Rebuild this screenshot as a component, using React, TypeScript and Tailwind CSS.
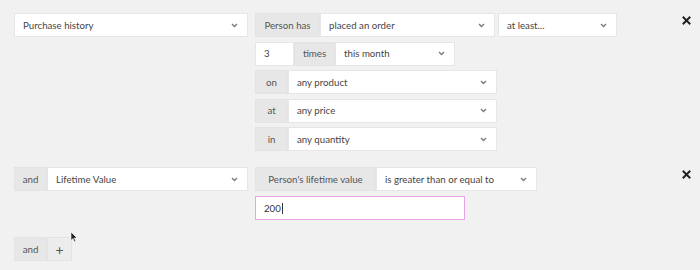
import React from "react";

function Chevron() {
  return (
    <svg width="7" height="5" viewBox="0 0 7 5" className="shrink-0">
      <path d="M1 1l2.5 2.5L6 1" fill="none" stroke="#777" strokeWidth="1.3" />
    </svg>
  );
}

function Close() {
  return (
    <svg width="9" height="9" viewBox="0 0 9 9">
      <path d="M1.5 1.5l6 6M7.5 1.5l-6 6" stroke="#222" strokeWidth="2" strokeLinecap="square" />
    </svg>
  );
}

function Select({ label, w }: { label: string; w: string }) {
  return (
    <div
      className={`${w} flex h-6 items-center justify-between border border-[#e6e6e6] bg-white pl-[8px] pr-[9px] text-[#454545]`}
    >
      <span>{label}</span>
      <Chevron />
    </div>
  );
}

function Label({ text, w }: { text: string; w: string }) {
  return (
    <div className={`${w} flex h-6 items-center justify-center border border-[#e3e3e3] bg-[#e7e7e7] text-[#555]`}>
      {text}
    </div>
  );
}

export default function App() {
  return (
    <div
      className="relative h-[270px] w-[700px] overflow-hidden bg-[#f1f1f1] pl-[14px] pt-[13px] text-[9.7px]"
      style={{ fontFamily: "Lato, 'Open Sans', sans-serif" }}
    >
      <div className="flex items-start">
        <Select label="Purchase history" w="w-[234px]" />
        <div className="ml-[7px] flex flex-col gap-[4.5px]">
          <div className="flex">
            <Label text="Person has" w="w-[65px]" />
            <Select label="placed an order" w="w-[175px]" />
            <div className="w-[3px]" />
            <Select label="at least..." w="w-[119px]" />
          </div>
          <div className="flex">
            <div className="flex h-6 w-[39px] items-center border border-[#e6e6e6] bg-white pl-[8px] text-[#454545]">3</div>
            <Label text="times" w="w-[41px]" />
            <Select label="this month" w="w-[120px]" />
          </div>
          <div className="flex">
            <Label text="on" w="w-[33px]" />
            <Select label="any product" w="w-[209px]" />
          </div>
          <div className="flex">
            <Label text="at" w="w-[33px]" />
            <Select label="any price" w="w-[209px]" />
          </div>
          <div className="flex">
            <Label text="in" w="w-[33px]" />
            <Select label="any quantity" w="w-[209px]" />
          </div>
        </div>
        <div className="ml-auto mr-[9px] mt-[3px]">
          <Close />
        </div>
      </div>

      <div className="mt-[16px] flex items-start">
        <div className="flex">
          <Label text="and" w="w-[33px]" />
          <Select label="Lifetime Value" w="w-[201px]" />
        </div>
        <div className="ml-[7px] flex flex-col gap-[5px]">
          <div className="flex">
            <Label text="Person's lifetime value" w="w-[121px]" />
            <Select label="is greater than or equal to" w="w-[161px]" />
          </div>
          <div className="flex h-6 w-[210px] items-center border border-[#e9a3ea] bg-white pl-[8px] text-[#333]">
            200<span className="ml-[1px] h-[11px] w-px bg-[#333]" />
          </div>
        </div>
        <div className="ml-auto mr-[9px] mt-[3px]">
          <Close />
        </div>
      </div>

      <div className="mt-[17px] flex">
        <Label text="and" w="w-[33px]" />
        <div className="flex h-6 w-[25px] items-center justify-center border border-[#e3e3e3] bg-[#ececec] text-[14px] text-[#555]">
          +
        </div>
      </div>

      <svg width="8" height="12" viewBox="0 0 8 12" className="absolute left-[70px] top-[231px]">
        <path d="M1 1v8.5l2-2 1.5 3.2 1.3-.6-1.5-3.1H7z" fill="#222" stroke="#fff" strokeWidth="0.6" />
      </svg>
    </div>
  );
}
